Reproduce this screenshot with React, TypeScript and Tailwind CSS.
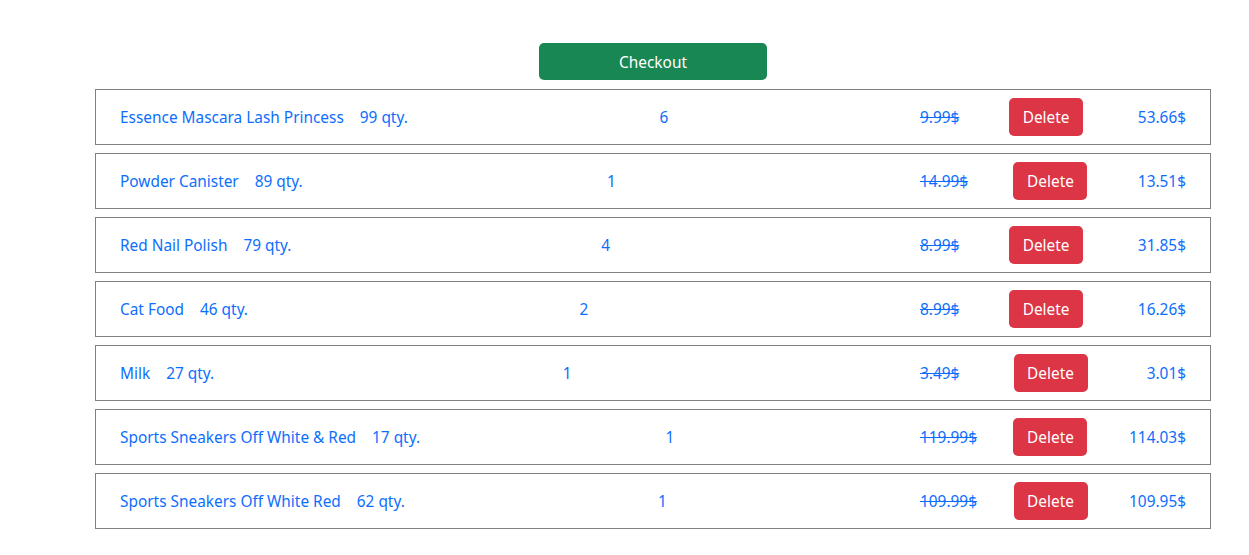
import React from "react";

const items = [
  { name: "Essence Mascara Lash Princess", stock: 99, qty: 6, price: "9.99$", total: "53.66$" },
  { name: "Powder Canister", stock: 89, qty: 1, price: "14.99$", total: "13.51$" },
  { name: "Red Nail Polish", stock: 79, qty: 4, price: "8.99$", total: "31.85$" },
  { name: "Cat Food", stock: 46, qty: 2, price: "8.99$", total: "16.26$" },
  { name: "Milk", stock: 27, qty: 1, price: "3.49$", total: "3.01$" },
  { name: "Sports Sneakers Off White & Red", stock: 17, qty: 1, price: "119.99$", total: "114.03$" },
  { name: "Sports Sneakers Off White Red", stock: 62, qty: 1, price: "109.99$", total: "109.95$" },
];

export default function App() {
  return (
    <div
      className="bg-white min-h-[555px] text-[15.4px] text-[#0d6efd]"
      style={{ fontFamily: '"Noto Sans", "Liberation Sans", sans-serif' }}
    >
      <div className="ml-[95px] w-[1116px] pt-[43px]">
        <div className="flex justify-center">
          <button className="w-[228px] h-[37px] pt-[3px] rounded-[5px] bg-[#198754] text-white leading-6">
            Checkout
          </button>
        </div>
        <div className="mt-[9px] flex flex-col gap-2">
          {items.map((it) => (
            <div
              key={it.name}
              className="h-[56px] border border-[#808080] flex items-center justify-between px-6 pt-[2px] leading-6"
            >
              <div className="flex items-center gap-4">
                <span>{it.name}</span>
                <span>{it.stock} qty.</span>
              </div>
              <span>{it.qty}</span>
              <div className="w-[266px] flex items-center justify-between">
                <span className="line-through">{it.price}</span>
                <button className="w-[74px] h-[38px] -mt-[2px] pt-[1px] rounded-[5px] bg-[#dc3545] text-white leading-6">
                  Delete
                </button>
                <span className="pl-[5px]">{it.total}</span>
              </div>
            </div>
          ))}
        </div>
      </div>
    </div>
  );
}
